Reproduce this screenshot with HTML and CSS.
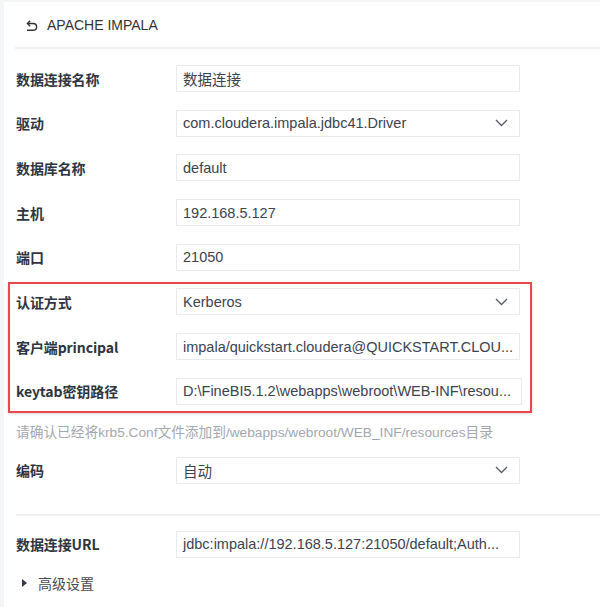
FILE: index.html
```html
<!DOCTYPE html>
<html lang="zh">
<head>
<meta charset="utf-8">
<title>APACHE IMPALA</title>
<link rel="stylesheet" href="styles.css">
</head>
<body>
<div class="panel">
  <div class="header">
    <svg class="back" width="14" height="13" viewBox="0 0 14 13"><path d="M4 4.5h5.2a3.4 3.4 0 0 1 0 6.8H3" fill="none" stroke="#333" stroke-width="1.4"/><path d="M6.2 1.8 3.4 4.5l2.8 2.7" fill="none" stroke="#333" stroke-width="1.4"/></svg>
    <span class="title">APACHE IMPALA</span>
  </div>
  <div class="form">
    <div class="row"><div class="label">数据连接名称</div><div class="field">数据连接</div></div>
    <div class="row"><div class="label">驱动</div><div class="field select">com.cloudera.impala.jdbc41.Driver<svg class="chev" width="13" height="8" viewBox="0 0 13 8"><path d="M1 1l5.5 5.5L12 1" fill="none" stroke="#555c68" stroke-width="1.3"/></svg></div></div>
    <div class="row"><div class="label">数据库名称</div><div class="field">default</div></div>
    <div class="row"><div class="label">主机</div><div class="field">192.168.5.127</div></div>
    <div class="row"><div class="label">端口</div><div class="field">21050</div></div>
    <div class="group">
      <div class="row"><div class="label">认证方式</div><div class="field select">Kerberos<svg class="chev" width="13" height="8" viewBox="0 0 13 8"><path d="M1 1l5.5 5.5L12 1" fill="none" stroke="#555c68" stroke-width="1.3"/></svg></div></div>
      <div class="row"><div class="label">客户端principal</div><div class="field">impala/quickstart.cloudera@QUICKSTART.CLOU...</div></div>
      <div class="row last"><div class="label">keytab密钥路径</div><div class="field wide">D:\FineBI5.1.2\webapps\webroot\WEB-INF\resou...</div></div>
    </div>
    <div class="hint">请确认已经将krb5.Conf文件添加到/webapps/webroot/WEB_INF/resources目录</div>
    <div class="row last"><div class="label">编码</div><div class="field select">自动<svg class="chev" width="13" height="8" viewBox="0 0 13 8"><path d="M1 1l5.5 5.5L12 1" fill="none" stroke="#555c68" stroke-width="1.3"/></svg></div></div>
    <div class="sep"></div>
    <div class="row last"><div class="label">数据连接URL</div><div class="field">jdbc:impala://192.168.5.127:21050/default;Auth...</div></div>
    <div class="adv"><span class="tri"></span>高级设置</div>
  </div>
</div>
</body>
</html>
```

FILE: styles.css
```css
html, body {
  margin: 0;
  padding: 0;
}
body {
  background: #f4f5f7;
  font-family: "Liberation Sans", "Noto Sans CJK SC", sans-serif;
  font-size: 14px;
  color: #333a44;
  height: 607px;
  overflow: hidden;
}
.panel {
  margin: 2px 0 0 4px;
  background: #fff;
  height: 605px;
}
.header {
  margin-left: 11px;
  border-bottom: 2px solid #eef0f2;
  display: flex;
  align-items: center;
  padding-left: 9px;
  box-sizing: border-box;
  height: 47px;
}
.back {
  margin: 1px 9px 0 0;
}
.title {
  font-family: "Liberation Sans", "Noto Sans CJK SC", sans-serif;
  font-size: 14px;
  color: #333;
}
.form {
  display: flex;
  flex-direction: column;
  padding: 16px 0 0 12px;
}
.row {
  display: flex;
  align-items: center;
  height: 27px;
  margin-bottom: 17.7px;
}
.row.last {
  margin-bottom: 0;
}
.label {
  width: 160px;
  flex: none;
  font-weight: 700;
  color: #2e3540;
  font-family: "Noto Sans CJK SC", sans-serif;
  font-size: 14px;
  letter-spacing: -0.1px;
}
.field {
  width: 344px;
  height: 27px;
  box-sizing: border-box;
  border: 1px solid #e8eaee;
  padding: 0 6px;
  display: flex;
  align-items: center;
  color: #3b4350;
  font-size: 14.5px;
  white-space: nowrap;
  overflow: hidden;
  font-family: "Liberation Sans", "Noto Sans CJK SC", sans-serif;
}
.field.wide {
  width: 346px;
}
.select {
  justify-content: space-between;
}
.chev {
  margin-right: 5px;
}
.group {
  position: relative;
  display: flex;
  flex-direction: column;
}
.group::before {
  content: "";
  position: absolute;
  top: -6px;
  left: -8px;
  width: 524px;
  bottom: -8px;
  border: 2px solid #e8474b;
  box-sizing: border-box;
  box-shadow: 0 1px 3px rgba(0,0,0,0.15);
  pointer-events: none;
}
.hint {
  margin: 18px 0 14px 0;
  line-height: 20px;
  color: #a3a7ae;
  font-size: 13.7px;
  font-family: "Liberation Sans", "Noto Sans CJK SC", sans-serif;
}
.sep {
  height: 2px;
  background: #eef0f2;
  margin: 30px 0 15px 0;
}
.adv {
  display: flex;
  align-items: center;
  margin-top: 15px;
  line-height: 20px;
  color: #444b56;
  font-family: "Noto Sans CJK SC", sans-serif;
}
.tri {
  width: 0;
  height: 0;
  border-left: 5px solid #333a44;
  border-top: 4px solid transparent;
  border-bottom: 4px solid transparent;
  margin: 0 11px 0 6px;
}
```
